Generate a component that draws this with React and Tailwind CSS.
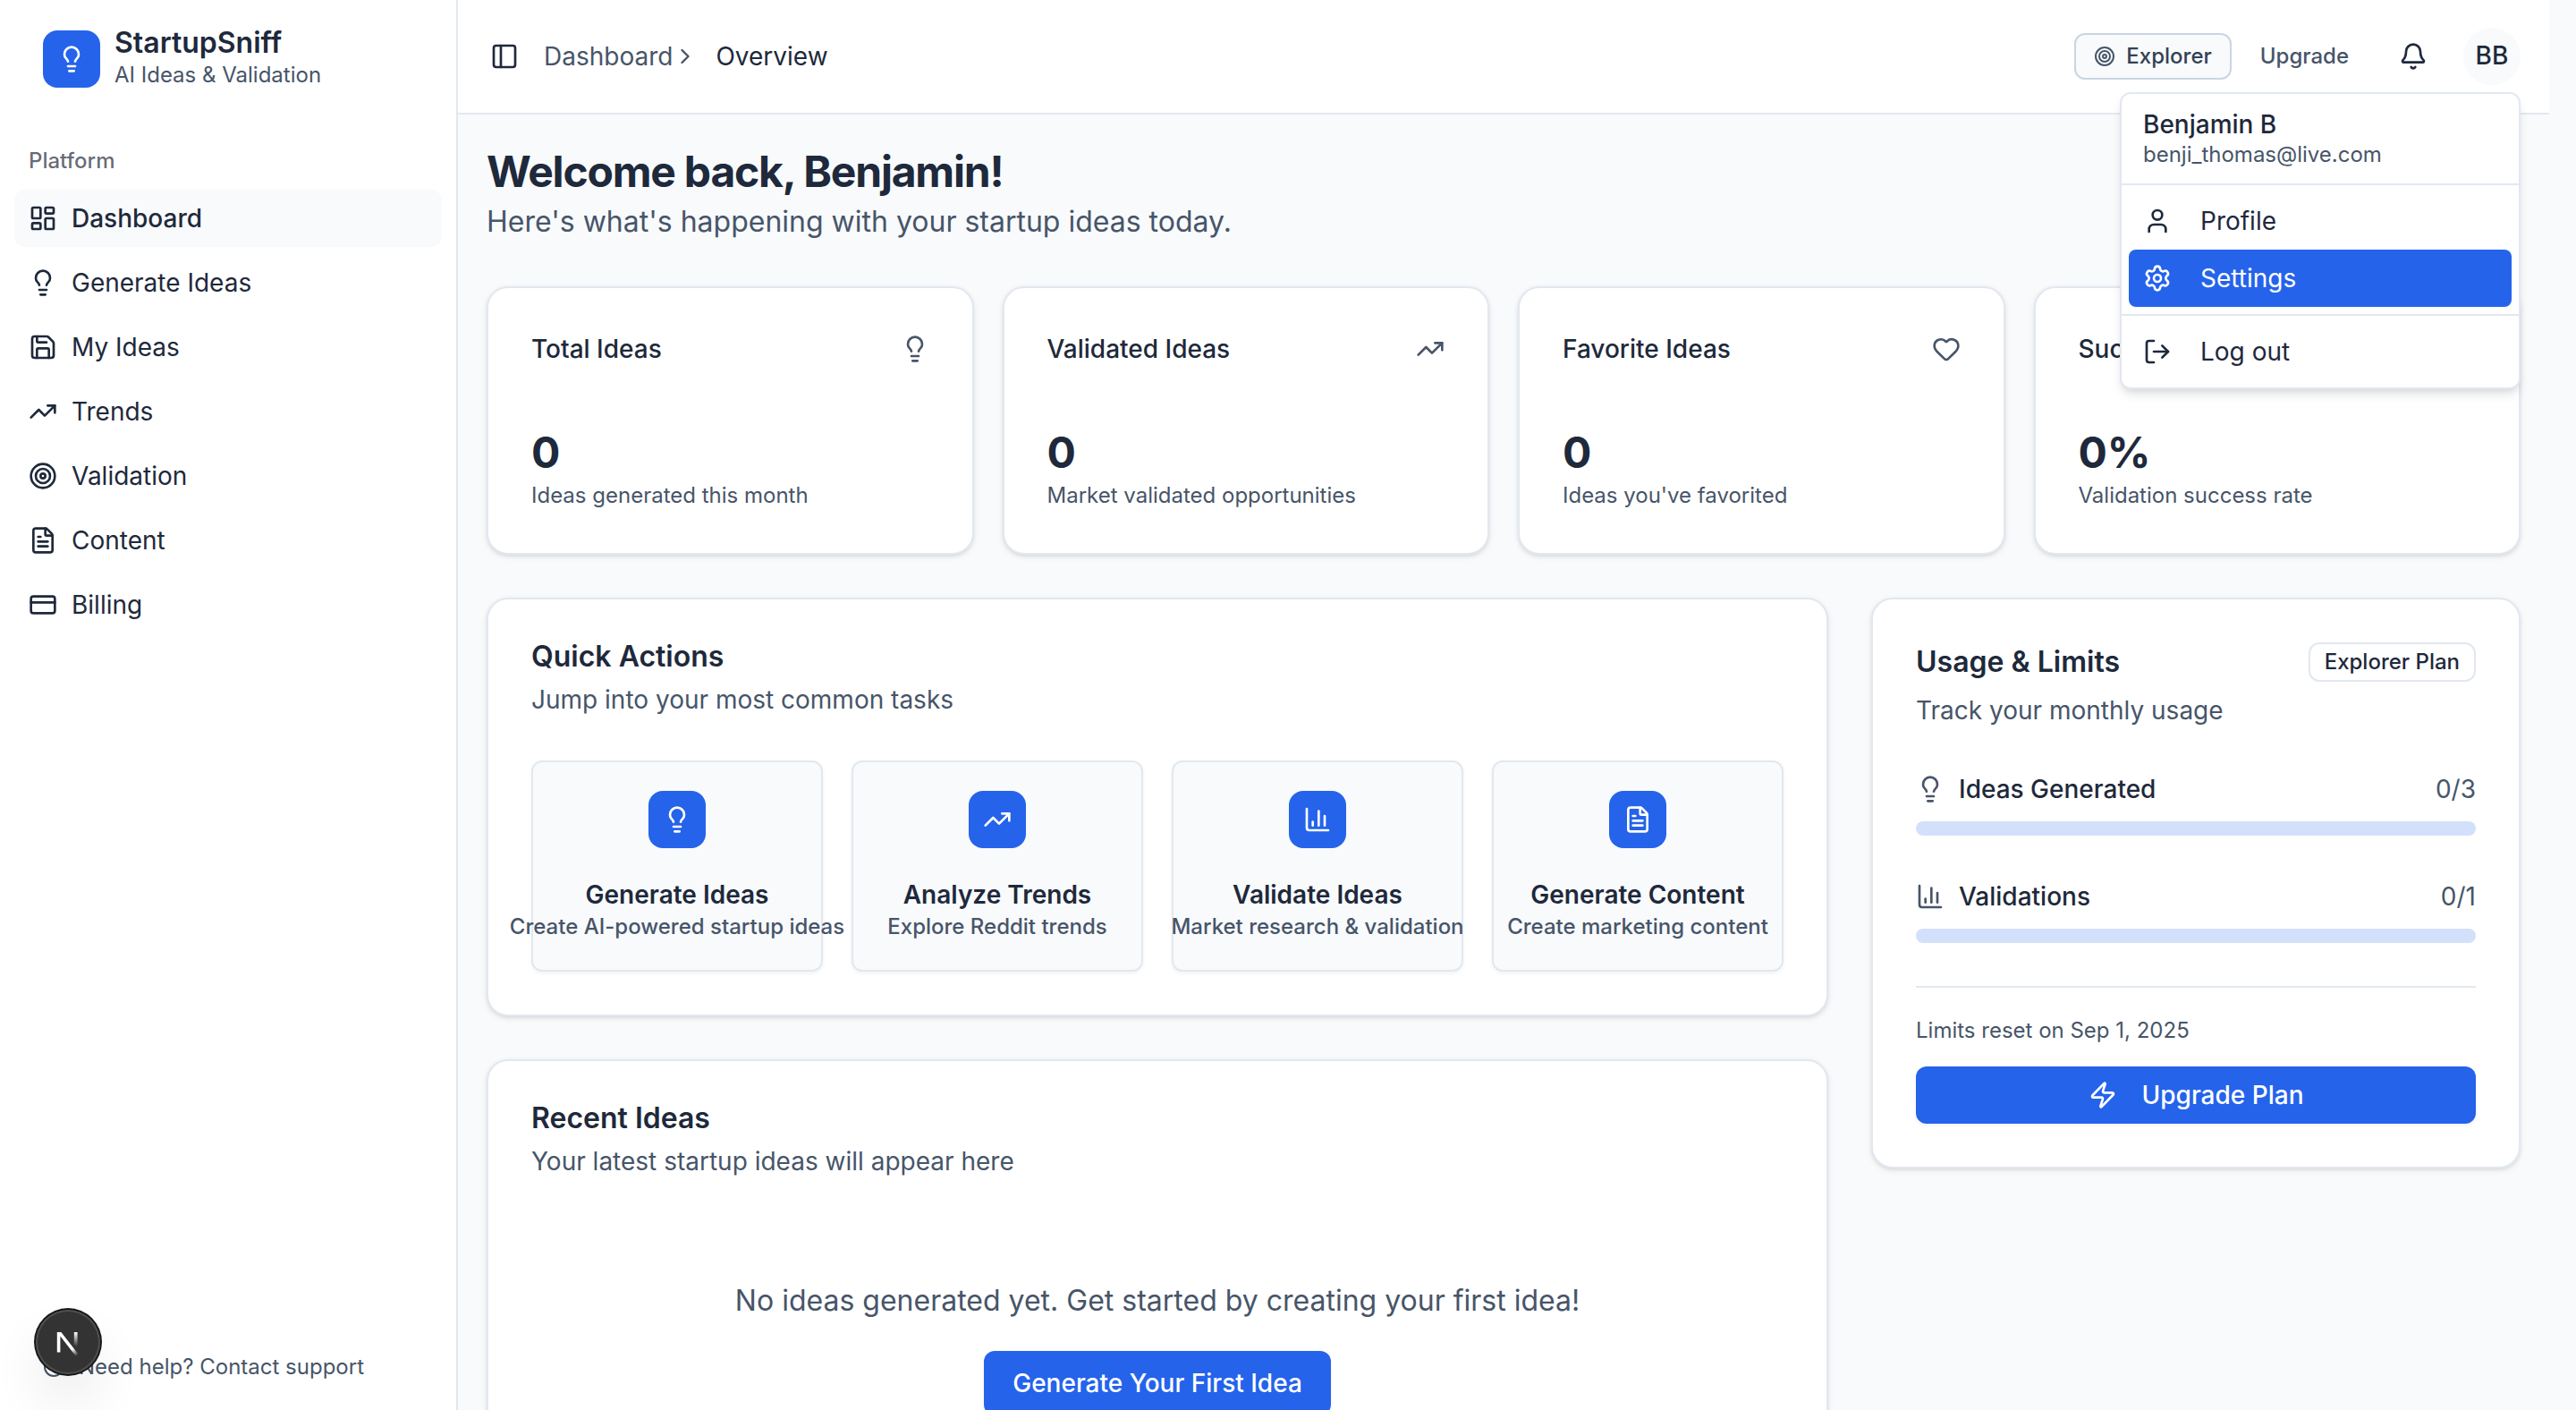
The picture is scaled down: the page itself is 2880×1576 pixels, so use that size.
import React from "react";
import {
  Bell,
  ChartColumn,
  ChevronRight,
  CircleQuestionMark,
  CreditCard,
  FileText,
  Heart,
  LayoutDashboard,
  Lightbulb,
  LogOut,
  PanelLeft,
  Save,
  Settings,
  Target,
  TrendingUp,
  User,
  Zap,
} from "lucide-react";

const NAV = [
  { label: "Dashboard", Icon: LayoutDashboard, active: true },
  { label: "Generate Ideas", Icon: Lightbulb },
  { label: "My Ideas", Icon: Save },
  { label: "Trends", Icon: TrendingUp },
  { label: "Validation", Icon: Target },
  { label: "Content", Icon: FileText },
  { label: "Billing", Icon: CreditCard },
];

const STATS = [
  { label: "Total Ideas", value: "0", note: "Ideas generated this month", Icon: Lightbulb },
  { label: "Validated Ideas", value: "0", note: "Market validated opportunities", Icon: TrendingUp },
  { label: "Favorite Ideas", value: "0", note: "Ideas you've favorited", Icon: Heart },
  { label: "Success Rate", value: "0%", note: "Validation success rate", Icon: Target },
];

const ACTIONS = [
  { label: "Generate Ideas", note: "Create AI-powered startup ideas", Icon: Lightbulb },
  { label: "Analyze Trends", note: "Explore Reddit trends", Icon: TrendingUp },
  { label: "Validate Ideas", note: "Market research & validation", Icon: ChartColumn },
  { label: "Generate Content", note: "Create marketing content", Icon: FileText },
];

const LIMITS = [
  { label: "Ideas Generated", used: 0, max: 3, Icon: Lightbulb },
  { label: "Validations", used: 0, max: 1, Icon: ChartColumn },
];

function Card({ className = "", children }) {
  return (
    <section
      className={
        "rounded-3xl border-2 border-slate-200 bg-white p-12 shadow-[0_2px_6px_0_rgba(0,0,0,0.1),0_2px_4px_-2px_rgba(0,0,0,0.1)] " +
        className
      }
    >
      {children}
    </section>
  );
}

function Sidebar() {
  return (
    <aside className="flex w-128 shrink-0 flex-col border-r-2 border-slate-200 bg-white">
      <a href="#home" className="flex items-center gap-4 px-12 pt-[30px]">
        <span className="flex size-16 items-center justify-center rounded-2xl bg-[#2563eb] text-white">
          <Lightbulb className="size-8" />
        </span>
        <span className="flex flex-col">
          <span className="text-[32px] leading-9 font-semibold">StartupSniff</span>
          <span className="text-2xl leading-9 text-[#475569]">AI Ideas &amp; Validation</span>
        </span>
      </a>
      <nav aria-label="Platform" className="mt-[46px] px-4">
        <h2 className="flex h-16 items-center px-4 text-2xl font-medium text-[#1e293b]/70">Platform</h2>
        <ul className="flex flex-col gap-2">
          {NAV.map(({ label, Icon, active }) => (
            <li key={label}>
              <a
                href={"#" + label.toLowerCase().replace(" ", "-")}
                aria-current={active ? "page" : undefined}
                className={
                  "flex h-16 items-center gap-4 rounded-xl px-4 text-[28px] leading-10 " +
                  (active ? "bg-slate-50 font-medium" : "")
                }
              >
                <Icon className="size-8" />
                {label}
              </a>
            </li>
          ))}
        </ul>
      </nav>
      <a href="#support" className="mt-auto flex items-center gap-4 px-12 pb-8 text-2xl text-[#475569]">
        <CircleQuestionMark className="size-6" />
        Need help? Contact support
      </a>
    </aside>
  );
}

function UserMenu() {
  const item = "flex h-16 w-full items-center gap-8 rounded-lg px-4 text-[28px] leading-10 ";
  return (
    <div className="absolute top-full right-0 z-10 mt-2 w-112 rounded-xl border-2 border-slate-200 bg-white py-2 font-normal shadow-[0_8px_12px_-2px_rgba(0,0,0,0.1),0_4px_8px_-4px_rgba(0,0,0,0.1)]">
      <div className="flex flex-col gap-2 px-6 py-3">
        <p className="text-[28px] leading-none font-medium">Benjamin B</p>
        <p className="text-2xl leading-none text-[#475569]">benji_thomas@live.com</p>
      </div>
      <hr className="my-2 border-t-2 border-slate-200" />
      <div role="menu" aria-label="Account" className="px-2">
        <button role="menuitem" className={item}>
          <User className="size-8" />
          Profile
        </button>
        <button role="menuitem" className={item + "bg-[#2563eb] text-white"}>
          <Settings className="size-8" />
          Settings
        </button>
      </div>
      <hr className="my-2 border-t-2 border-slate-200" />
      <div className="px-2">
        <button className={item}>
          <LogOut className="size-8" />
          Log out
        </button>
      </div>
    </div>
  );
}

function Header() {
  return (
    <header className="flex h-32 shrink-0 items-center justify-between border-b-2 border-slate-200 bg-white px-8">
      <div className="flex items-center gap-7">
        <button aria-label="Toggle sidebar" className="pl-1">
          <PanelLeft className="size-8" />
        </button>
        <nav aria-label="Breadcrumb" className="flex items-center gap-5 text-[28px] leading-10">
          <a href="#dashboard" className="flex items-center text-[#475569]">
            Dashboard
            <ChevronRight className="size-7" />
          </a>
          <span aria-current="page">Overview</span>
        </nav>
      </div>
      <div className="flex items-center gap-2 text-2xl font-medium">
        <button className="flex items-center gap-3 rounded-xl border-2 border-slate-300 bg-slate-50 px-5 py-2 text-[#334155]">
          <Target className="size-6 text-[#475569]" />
          Explorer
        </button>
        <button className="px-6 text-[#475569]">Upgrade</button>
        <button aria-label="Notifications" className="mx-2 flex size-16 items-center justify-center">
          <Bell className="size-8" />
        </button>
        <div className="relative ml-2">
          <button
            aria-label="Account menu"
            className="flex size-16 items-center justify-center rounded-full bg-slate-50 text-[28px]"
          >
            BB
          </button>
          <UserMenu />
        </div>
      </div>
    </header>
  );
}

function StatCard({ label, value, note, Icon }) {
  return (
    <Card className="flex flex-col gap-16">
      <div className="flex items-center justify-between">
        <h2 className="text-[28px] leading-10 font-medium">{label}</h2>
        <Icon className="size-8 text-[#475569]" />
      </div>
      <div>
        <p className="text-5xl leading-16 font-bold">{value}</p>
        <p className="text-2xl text-[#475569]">{note}</p>
      </div>
    </Card>
  );
}

function CardTitle({ title, note, children }) {
  return (
    <div className="flex flex-col gap-3">
      <div className="flex items-center justify-between">
        <h2 className="text-[32px] leading-none font-semibold">{title}</h2>
        {children}
      </div>
      <p className="text-[28px] leading-10 text-[#475569]">{note}</p>
    </div>
  );
}

function QuickActions() {
  return (
    <Card className="flex flex-col gap-12">
      <CardTitle title="Quick Actions" note="Jump into your most common tasks" />
      <div className="grid grid-cols-4 gap-8">
        {ACTIONS.map(({ label, note, Icon }) => (
          <button
            key={label}
            className="flex min-w-0 flex-col items-center gap-8 rounded-xl border-2 border-slate-200 bg-slate-50 py-8 whitespace-nowrap shadow-[0_2px_4px_0_rgba(0,0,0,0.05)]"
          >
            <span className="flex size-16 items-center justify-center rounded-2xl bg-[#2563eb] text-white">
              <Icon className="size-8" />
            </span>
            <span className="flex flex-col items-center">
              <span className="text-[28px] leading-10 font-semibold">{label}</span>
              <span className="text-2xl font-medium text-[#475569]">{note}</span>
            </span>
          </button>
        ))}
      </div>
    </Card>
  );
}

function RecentIdeas() {
  return (
    <Card>
      <CardTitle title="Recent Ideas" note="Your latest startup ideas will appear here" />
      <div className="mt-12 flex flex-col items-center gap-8 py-16">
        <p className="text-[32px] leading-12 text-[#475569]">
          No ideas generated yet. Get started by creating your first idea!
        </p>
        <button className="rounded-xl bg-[#2563eb] px-8 py-4 text-[28px] leading-10 font-medium text-white shadow-[0_2px_4px_0_rgba(0,0,0,0.05)]">
          Generate Your First Idea
        </button>
      </div>
    </Card>
  );
}

function UsageLimits() {
  return (
    <Card className="flex flex-col gap-12">
      <CardTitle title="Usage & Limits" note="Track your monthly usage">
        <span className="rounded-xl border-2 border-slate-200 px-4 py-1 text-2xl font-medium">Explorer Plan</span>
      </CardTitle>
      {LIMITS.map(({ label, used, max, Icon }) => (
        <div key={label} className="flex flex-col gap-4">
          <div className="flex items-center gap-4 text-[28px] leading-10">
            <Icon className="size-8 text-[#475569]" />
            <span className="font-medium">{label}</span>
            <span className="ml-auto text-[#475569]">
              {used}/{max}
            </span>
          </div>
          <div
            role="progressbar"
            aria-label={label}
            aria-valuenow={used}
            aria-valuemax={max}
            className="h-4 overflow-hidden rounded-full bg-[#2563eb]/20"
          >
            <div className="h-full bg-[#2563eb]" style={{ width: (used / max) * 100 + "%" }} />
          </div>
        </div>
      ))}
      <div className="flex flex-col gap-6 border-t-2 border-slate-200 pt-8">
        <p className="text-2xl text-[#475569]">Limits reset on Sep 1, 2025</p>
        <button className="flex h-16 items-center justify-center gap-7 rounded-xl bg-[#2563eb] text-[28px] font-medium text-white shadow-[0_2px_4px_0_rgba(0,0,0,0.05)]">
          <Zap className="size-8" />
          Upgrade Plan
        </button>
      </div>
    </Card>
  );
}

function DevBadge() {
  return (
    <button
      aria-label="Open Next.js Dev Tools"
      className="fixed bottom-10 left-10 flex size-18 items-center justify-center rounded-full bg-[#333333] shadow-[0_0_0_2px_#171717,inset_0_0_0_2px_rgba(255,255,255,0.14),0_32px_64px_-16px_rgba(0,0,0,0.24)]"
    >
      <svg width="30" height="32" viewBox="0 -1 15 16" aria-hidden="true">
        <defs>
          <linearGradient id="diag" x1="9.9" y1="11" x2="12.9" y2="15" gradientUnits="userSpaceOnUse">
            <stop stopColor="white" />
            <stop offset="0.9" stopColor="white" stopOpacity="0" />
          </linearGradient>
          <linearGradient id="bar" x1="11.8" y1="1.5" x2="11.8" y2="9.5" gradientUnits="userSpaceOnUse">
            <stop stopColor="white" />
            <stop offset="1" stopColor="white" stopOpacity="0" />
          </linearGradient>
        </defs>
        <path fill="url(#diag)" d="M1.4 1.5H3.7L13.9 14.6L12.5 15.7L3.2 3.8V12.8H1.4Z" />
        <path fill="url(#bar)" d="M10.9 1.5H12.8V13.1H10.9Z" />
      </svg>
    </button>
  );
}

export default function App() {
  return (
    <div className="flex h-screen overflow-hidden bg-slate-50 font-[Inter,sans-serif] text-[#1e293b]">
      <Sidebar />
      <div className="mr-[30px] flex min-w-0 flex-1 flex-col">
        <Header />
        <main className="flex flex-col gap-12 px-8 pt-8">
          <div>
            <h1 className="text-5xl leading-16 font-bold tracking-tight">Welcome back, Benjamin!</h1>
            <p className="text-[32px] leading-12 text-[#475569]">
              Here's what's happening with your startup ideas today.
            </p>
          </div>
          <div className="grid grid-cols-4 gap-8">
            {STATS.map((stat) => (
              <StatCard key={stat.label} {...stat} />
            ))}
          </div>
          <div className="grid grid-cols-3 items-start gap-12">
            <div className="col-span-2 flex flex-col gap-12">
              <QuickActions />
              <RecentIdeas />
            </div>
            <UsageLimits />
          </div>
        </main>
      </div>
      <DevBadge />
    </div>
  );
}
